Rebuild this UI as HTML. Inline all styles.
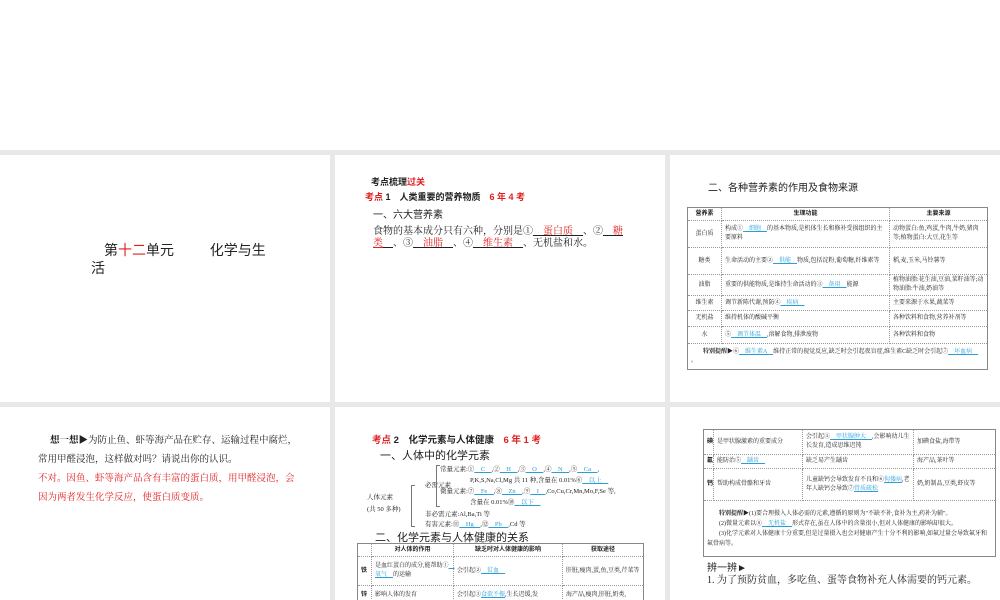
<!DOCTYPE html>
<html><head><meta charset="utf-8"><style>
*{margin:0;padding:0;box-sizing:border-box}
body{width:1000px;height:600px;background:#fff;position:relative;overflow:hidden;font-family:"Liberation Serif","Noto Serif CJK SC","Noto Sans CJK SC",serif;color:#222}
.g{position:absolute;left:0;top:150px;width:1000px;height:450px;background:#e8e8e8}
.p{position:absolute;background:#fff;overflow:hidden}
.a{position:absolute;white-space:nowrap}
.r{color:#e02020}
.b{color:#2a9fd6}
.u{text-decoration:underline}
.h{font-family:"Liberation Sans","Noto Sans CJK SC",sans-serif;font-weight:bold}
table{position:absolute;border-collapse:collapse;table-layout:fixed;font-size:6px;line-height:9px}
td{border:1px dotted #999;padding:1px 3px;vertical-align:middle}
table{border:1px solid #888}
.c{text-align:center}
</style></head><body>
<div class="g"></div>

<div class="p" style="left:0;top:155px;width:330px;height:247px">
<div class="a h" style="left:104px;top:85px;font-size:14px;font-weight:normal">第<span class="r">十二</span>单元　　&nbsp;&nbsp;化学与生</div>
<div class="a h" style="left:91px;top:103px;font-size:14px;font-weight:normal">活</div>
</div>

<div class="p" style="left:335px;top:155px;width:330px;height:247px;font-size:10px">
<div class="a h" style="left:36px;top:20px;font-size:9px">考点梳理<span class="r">过关</span></div>
<div class="a h" style="left:30px;top:35px;font-size:9px"><span class="r">考点</span> 1　人类重要的营养物质　<span class="r">6 年 4 考</span></div>
<div class="a h" style="left:38px;top:51px;font-size:10px;font-weight:normal">一、六大营养素</div>
<div class="a" style="left:38px;top:67px">食物的基本成分只有六种，分别是①<span class="u">__<span class="r">蛋白质</span>__</span>、②<span class="u">__<span class="r">糖</span></span></div>
<div class="a" style="left:38px;top:79px"><span class="u r">类</span><span class="u">__</span>、③<span class="u">__<span class="r">油脂</span>__</span>、④<span class="u">__<span class="r">维生素</span>__</span>、无机盐和水。</div>
</div>

<div class="p" style="left:670px;top:155px;width:330px;height:247px">
<div class="a h" style="left:38px;top:24px;font-size:10px;font-weight:normal">二、各种营养素的作用及食物来源</div>
<table style="left:17px;top:52px;width:300px">
<col style="width:34px"><col style="width:168px"><col style="width:98px">
<tr style="height:13px"><td class="c h">营养素</td><td class="c h">生理功能</td><td class="c h">主要来源</td></tr>
<tr style="height:27px"><td class="c">蛋白质</td><td>构成①<span class="u b">　细胞　</span>的基本物质,是机体生长和修补受损组织的主要原料</td><td>动物蛋白:鱼,鸡蛋,牛肉,牛奶,猪肉等;植物蛋白:大豆,花生等</td></tr>
<tr style="height:27px"><td class="c">糖类</td><td>生命活动的主要②<span class="u b">　供能　</span>物质,包括淀粉,葡萄糖,纤维素等</td><td>稻,麦,玉米,马铃薯等</td></tr>
<tr style="height:20px"><td class="c">油脂</td><td>重要的供能物质,是维持生命活动的③<span class="u b">　备用　</span>能源</td><td>植物油脂:花生油,豆油,菜籽油等;动物油脂:牛油,奶油等</td></tr>
<tr style="height:15px"><td class="c">维生素</td><td>调节新陈代谢,预防④<span class="u b">　疾病　</span></td><td>主要来源于水果,蔬菜等</td></tr>
<tr style="height:16px"><td class="c">无机盐</td><td>维持机体的酸碱平衡</td><td>各种饮料和食物,营养补剂等</td></tr>
<tr style="height:17px"><td class="c">水</td><td>⑤<span class="u b">　调节体温　</span>,溶解食物,排泄废物</td><td>各种饮料和食物</td></tr>
<tr style="height:26px"><td colspan="3">　　<b>特别提醒▶</b>⑥<span class="u b">　维生素A　</span>维持正常的视觉反应,缺乏时会引起夜盲症,维生素C缺乏时会引起⑦<span class="u b">　坏血病　</span>。</td></tr>
</table>
</div>

<div class="p" style="left:0;top:407px;width:330px;height:193px;font-size:9.5px;line-height:19px">
<div class="a" style="left:50px;top:25px"><b>想一想▶</b>为防止鱼、虾等海产品在贮存、运输过程中腐烂，</div>
<div class="a" style="left:38px;top:44px">常用甲醛浸泡，这样做对吗？请说出你的认识。</div>
<div class="a r" style="left:38px;top:63px">不对。因鱼、虾等海产品含有丰富的蛋白质，用甲醛浸泡，会</div>
<div class="a r" style="left:38px;top:82px">因为两者发生化学反应，使蛋白质变质。</div>
</div>

<div class="p" style="left:335px;top:407px;width:330px;height:193px;font-size:6.5px">
<div class="a h" style="left:37px;top:25px;font-size:9.5px"><span class="r">考点</span> 2　化学元素与人体健康　<span class="r">6 年 1 考</span></div>
<div class="a h" style="left:45px;top:40px;font-size:11px;font-weight:normal">一、人体中的化学元素</div>
<div class="a" style="left:105px;top:57px">常量元素:①<span class="u b">　C　</span>,②<span class="u b">　H　</span>,③<span class="u b">　O　</span>,④<span class="u b">　N　</span>,⑤<span class="u b">　Ca　</span>,</div>
<div class="a" style="left:135px;top:68px">P,K,S,Na,Cl,Mg 共 11 种,含量在 0.01%⑥<span class="u b">　以上　</span></div>
<div class="a" style="left:90px;top:73px">必需元素</div>
<div class="a" style="left:105px;top:79px">微量元素:⑦<span class="u b">　Fe　</span>,⑧<span class="u b">　Zn　</span>,⑨<span class="u b">　I　</span>,Co,Cu,Cr,Mn,Mo,F,Se 等,</div>
<div class="a" style="left:135px;top:90px">含量在 0.01%⑩<span class="u b">　以下　</span></div>
<div class="a" style="left:32px;top:85px">人体元素</div>
<div class="a" style="left:32px;top:97px">(共 50 多种)</div>
<div class="a" style="left:90px;top:102px">非必需元素:Al,Ba,Ti 等</div>
<div class="a" style="left:90px;top:112px">有害元素:⑪<span class="u b">　Hg　</span>,⑫<span class="u b">　Pb　</span>,Cd 等</div>
<div class="a" style="left:76px;top:78px;width:4px;height:42px;border:1px solid #777;border-right:none"></div>
<div class="a" style="left:101px;top:58px;width:4px;height:42px;border:1px solid #777;border-right:none"></div>
<div class="a h" style="left:40px;top:122px;font-size:11px;font-weight:normal">二、化学元素与人体健康的关系</div>
<table style="left:22px;top:136px;width:286px">
<col style="width:14px"><col style="width:82px"><col style="width:109px"><col style="width:81px">
<tr style="height:13px"><td></td><td class="c h">对人体的作用</td><td class="c h">缺乏时对人体健康的影响</td><td class="c h">获取途径</td></tr>
<tr style="height:29px"><td class="h">铁</td><td>是血红蛋白的成分,能帮助①<span class="u b">　氧气　</span>的运输</td><td>会引起②<span class="u b">　贫血　</span></td><td>肝脏,瘦肉,蛋,鱼,豆类,芹菜等</td></tr>
<tr style="height:20px"><td class="h">锌</td><td>影响人体的发育</td><td>会引起③<span class="u b">食欲不振</span>,生长迟缓,发</td><td>海产品,瘦肉,肝脏,奶类,</td></tr>
</table>
</div>

<div class="p" style="left:670px;top:407px;width:330px;height:193px">
<table style="left:33px;top:22px;width:292px">
<col style="width:10px"><col style="width:89px"><col style="width:111px"><col style="width:82px">
<tr style="height:25px"><td class="h">碘</td><td>是甲状腺激素的重要成分</td><td>会引起④<span class="u b">　甲状腺肿大　</span>,会影响幼儿生长发育,造成思维迟钝</td><td>加碘食盐,海带等</td></tr>
<tr style="height:14px"><td class="h">氟</td><td>能防治⑤<span class="u b">　龋齿　</span></td><td>缺乏易产生龋齿</td><td>海产品,茶叶等</td></tr>
<tr style="height:32px"><td class="h">钙</td><td>帮助构成骨骼和牙齿</td><td>儿童缺钙会导致发育不良和⑥<span class="u b">佝偻病</span>,老年人缺钙会导致⑦<span class="u b">骨质疏松</span></td><td>奶,奶制品,豆类,虾皮等</td></tr>
<tr style="height:56px"><td colspan="4" style="line-height:10px">　　<b>特别提醒▶</b>(1)要合理摄入人体必需的元素,遵循的原则为"不缺不补,食补为主,药补为辅"。<br>　　(2)微量元素以⑧<span class="u b">　无机盐　</span>形式存在,虽在人体中的含量很小,但对人体健康的影响却很大。<br>　　(3)化学元素对人体健康十分重要,但是过量摄入也会对健康产生十分不利的影响,如氟过量会导致氟牙和氟骨病等。</td></tr>
</table>
<div class="a h" style="left:37px;top:152px;font-size:10px;font-weight:normal">辨一辨►</div>
<div class="a" style="left:37px;top:164px;font-size:10px">1. 为了预防贫血，多吃鱼、蛋等食物补充人体需要的钙元素。</div>
</div>
</body></html>
